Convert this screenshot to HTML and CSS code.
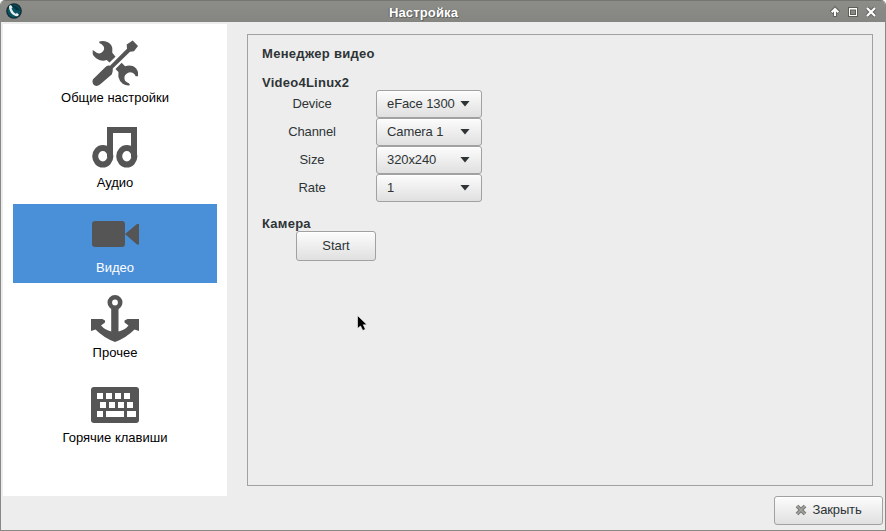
FILE: index.html
```html
<!DOCTYPE html>
<html lang="ru">
<head>
<meta charset="utf-8">
<title>Настройка</title>
<link rel="stylesheet" href="styles.css">
</head>
<body>
<div class="window">
  <header class="titlebar">
    <svg class="app-icon" width="16" height="16" viewBox="0 0 16 16"><circle cx="8" cy="8" r="7.8" fill="#142c36"/><circle cx="8" cy="8" r="6.4" fill="#075562"/><path d="M5 2 Q12 2 14 8 L10 7Z" fill="#063340"/><path d="M3 3 5 2 6.5 4.5 5.5 5.8Q7 9 9.5 10.8L11 10 13 11.8 11.5 13.3Q8 13.5 4.8 9.5 2.6 6 3 3Z" fill="#e6eeee"/></svg>
    <h1>Настройка</h1>
    <div class="controls">
      <svg width="12" height="12" viewBox="0 0 12 12"><path d="M6 11V4M2.2 6.5 6 2.7 9.8 6.5" stroke="#62645e" stroke-width="4" fill="none"/><path d="M6 10V4M2.7 6.3 6 3 9.3 6.3" stroke="#fff" stroke-width="2" fill="none"/></svg>
      <svg width="12" height="12" viewBox="0 0 12 12"><path d="M1 1h10v10H1z" fill="#5c5e58"/><path d="M2 2h8v8H2z" fill="#fff"/><path d="M3 3.5h6V9H3z" fill="#5c5e58"/><path d="M4 4.5h4V8H4z" fill="#888984"/></svg>
      <svg width="12" height="12" viewBox="0 0 12 12"><path d="m2 2 8 8M10 2 2 10" stroke="#62645e" stroke-width="4"/><path d="m2 2 8 8M10 2 2 10" stroke="#fff" stroke-width="2.2"/></svg>
    </div>
  </header>
  <div class="content">
    <nav class="sidebar">
      <div class="item"><svg width="48" height="48" viewBox="0 0 48 48"><g fill="#555"><path d="M8.3 2.5Q11 1.5 14 2.2Q20.5 4 21.3 9V13.7L24.5 17.7 18.5 23.5 15.7 21Q12 22.5 8.3 21Q3 18.5 1.7 15V11L5.7 13.7Q9 15.5 11.3 13Q14 10.5 12.7 7.5Q11 4.5 8.3 4Z"/><path d="M30.7 23.8 24.5 30 27.4 33V38Q28.5 42.5 31.7 44.8Q35 46.9 39 46.3L38 44.2Q34 43 33.5 40Q33 36.5 35.3 35Q38 32.2 41.5 33.7Q43.5 34.5 44.7 37.2H47V33Q45.5 28.5 41.7 27Q38 25.7 34 27.2Z"/><path d="M35.7 5.5 41.7 1.5 47 7 43 12.3 39 12.7 21.7 29.5Q22.2 32 20.7 35.5L9 45.5Q5 48.5 2 45Q1 42 2 40.3L14 28.5Q16 26 19 26.7L36 9.7Z"/></g></svg><span>Общие настройки</span></div>
      <div class="item"><svg width="48" height="48" viewBox="0 0 48 48"><path d="M16 3H46V33H40V9H22V33H16Z" fill="#555"/><g fill="none" stroke="#555" stroke-width="6"><ellipse cx="11.8" cy="32.3" rx="7.6" ry="8.2"/><ellipse cx="35.8" cy="32.3" rx="7.6" ry="8.2"/></g></svg><span>Аудио</span></div>
      <div class="item selected"><svg width="48" height="48" viewBox="0 0 48 48"><rect x="1" y="12" width="33" height="26" rx="3" fill="#555"/><path d="M34 25 46 15H48V35.5H46Z" fill="#555"/></svg><span>Видео</span></div>
      <div class="item"><svg width="48" height="48" viewBox="0 0 48 48"><path d="M20.2 14H27.5V37.5Q34 36 37.5 31.5L33.5 28.5V26.5L36.5 25H48V37L43.5 35.5Q35 44 24 48 13 44 4.5 35.5L0 37V25H11.3L14 26.5V28.5L10 31.5Q14 36 20.2 37.5Z" fill="#555"/><circle cx="24" cy="8.5" r="5.2" fill="none" stroke="#555" stroke-width="4.6"/></svg><span>Прочее</span></div>
      <div class="item"><svg width="48" height="48" viewBox="0 0 48 48"><rect y="8" width="48" height="36" rx="3" fill="#555"/><path d="M6 14h6v6H6zM15 14h6v6h-6zM24 14h6v6h-6zM33 14h6v6h-6zM9 23h6v6H9zM18 23h6v6h-6zM27 23h6v6h-6zM36 23h6v6h-6zM6 32h6v6H6zM15 32h18v6H15zM36 32h9v6h-9z" fill="#fff"/></svg><span>Горячие клавиши</span></div>
    </nav>
    <main class="panel">
      <h2>Менеджер видео</h2>
      <h3>Video4Linux2</h3>
      <div class="form">
        <label>Device</label><button class="combo"><span>eFace 1300</span><i></i></button>
        <label>Channel</label><button class="combo"><span>Camera 1</span><i></i></button>
        <label>Size</label><button class="combo"><span>320x240</span><i></i></button>
        <label>Rate</label><button class="combo"><span>1</span><i></i></button>
      </div>
      <h3 class="camera">Камера</h3>
      <button class="start">Start</button>
    </main>
  </div>
  <footer><button class="close"><svg width="12" height="12" viewBox="0 0 12 12"><path d="m2 2 8 8M10 2 2 10" stroke="#777874" stroke-width="3.8"/><path d="m2 2 8 8M10 2 2 10" stroke="#a4a5a1" stroke-width="1.6"/></svg><span>Закрыть</span></button></footer>
</div>
<svg class="cursor" width="12" height="18" viewBox="0 0 12 18"><path d="M.5.5V13.5L3.5 11 5.8 15.5 8.4 14.3 6.3 9.8H10Z" fill="#000" stroke="#fff" stroke-width=".6"/></svg>
</body>
</html>
```
FILE: styles.css
```css
* { box-sizing: border-box; }
body { margin: 0; background: #fff; font: 13px/16px "Liberation Sans", Arial, sans-serif; color: #2e3436; }
h1, h2, h3 { margin: 0; font-size: 13px; line-height: 16px; font-weight: bold; }
svg { display: block; flex: none; }
.window { width: 886px; height: 531px; background: #ededed; border: 1px solid #888984; border-top: 0; border-radius: 5px 5px 0 0; overflow: hidden; display: flex; flex-direction: column; }
.titlebar { height: 22px; flex: none; background: linear-gradient(#74756f 0 1px, #8c8d88 1px, #858681); display: grid; grid-template-columns: 40px 1fr 76px; align-items: center; padding: 1px 8px 0 5px; }
.titlebar h1 { text-align: center; color: #fff; letter-spacing: .15px; padding-top: 2px; text-shadow: 1px 1px #62635f, -1px 0 #62635f; }
.app-icon { margin-top: -1px; }
.controls { display: flex; justify-content: flex-end; gap: 6px; padding-top: 1px; }
.content { display: flex; height: 474px; }
.sidebar { width: 224px; height: 472px; margin: 2px 20px 0 2px; padding: 10px; background: #fff; display: flex; flex-direction: column; gap: 6px; }
.item { height: 79px; padding-top: 5px; display: flex; flex-direction: column; align-items: center; color: #000; }
.item span { margin-top: 3px; white-space: nowrap; }
.selected { background: #4a90d9; color: #fff; }
.panel { width: 626px; height: 452px; margin-top: 12px; border: 1px solid #a1a1a1; padding: 11px 14px; }
.panel h2 { letter-spacing: .3px; margin-bottom: 13px; }
.panel h3 { letter-spacing: .25px; height: 16px; }
.form { display: grid; grid-template-columns: 100px 106px; column-gap: 14px; grid-auto-rows: 28px; margin-top: -1px; }
.form label { text-align: center; line-height: 27px; letter-spacing: -.1px; }
button { font: inherit; color: inherit; margin: 0; border: 1px solid #a1a1a1; border-radius: 3px; background: linear-gradient(#fcfcfc, #e0e0e0); box-shadow: inset 0 1px #fff; }
.combo { display: flex; align-items: center; justify-content: space-between; padding: 0 11px 1px 10px; white-space: nowrap; letter-spacing: -.1px; }
.combo i { width: 10px; height: 6px; background: #2e3436; clip-path: polygon(0 0, 100% 0, 50% 100%); }
.panel .camera { margin-top: 14px; height: 15px; }
.start { display: block; width: 80px; height: 30px; margin-left: 34px; padding-bottom: 2px; }
footer { display: flex; justify-content: flex-end; padding-right: 2px; }
.close { display: flex; align-items: center; justify-content: center; width: 109px; height: 29px; gap: 5px; padding: 0 2px 2px 2px; letter-spacing: -.15px; }
.cursor { position: absolute; left: 357px; top: 315px; }
```
